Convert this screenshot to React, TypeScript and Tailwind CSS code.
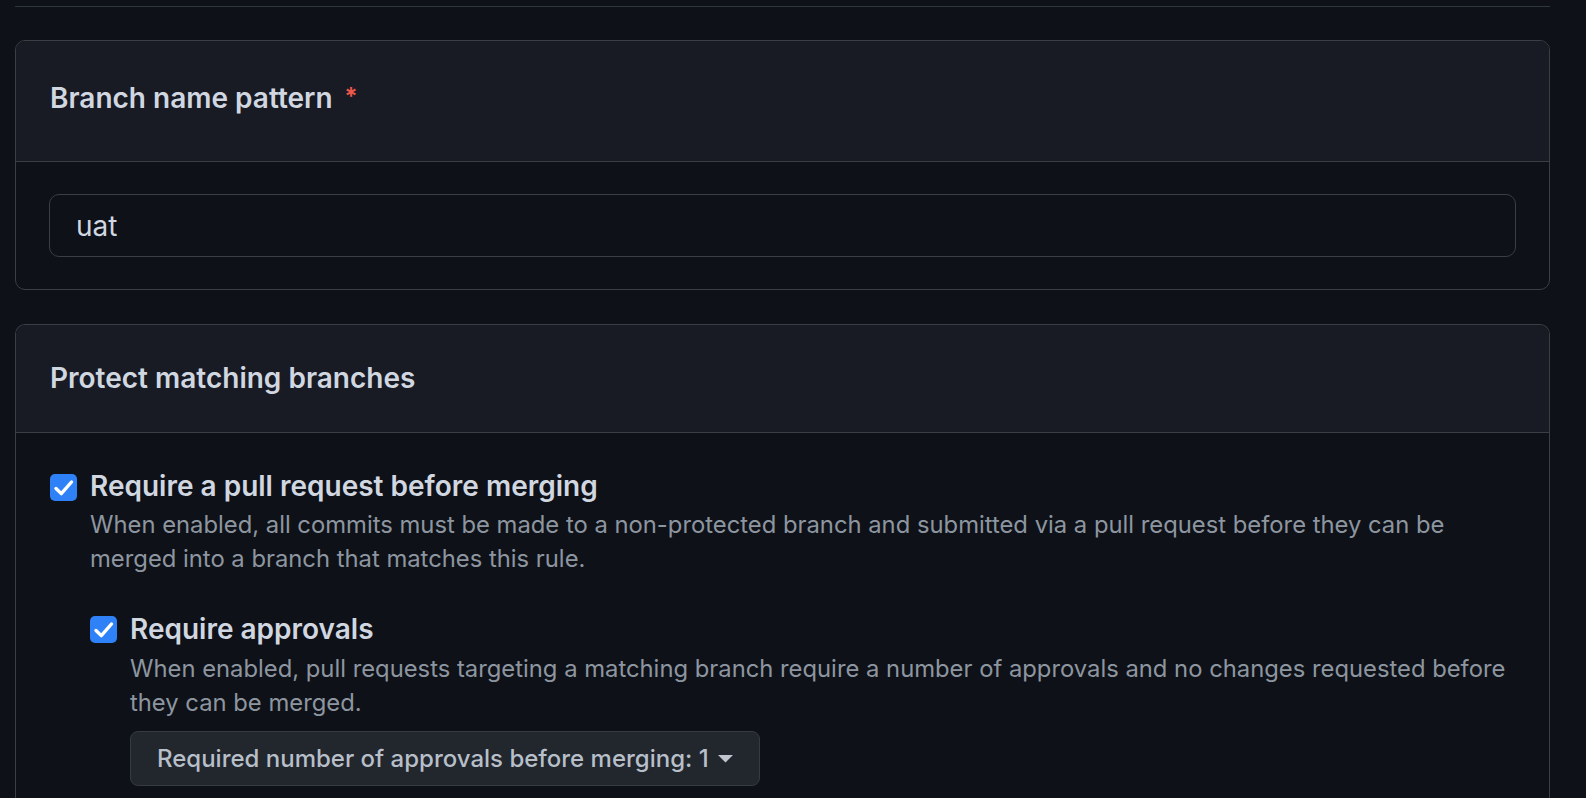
import React from "react";

function Check() {
  return (
    <span className="block h-[27px] w-[27px] shrink-0 rounded-[5px] bg-[#2f81f7]">
      <svg width="27" height="27" viewBox="0 0 27 27" fill="none">
        <path d="M6 14.5 L11.3 19.6 L21.5 8" stroke="white" strokeWidth="3.4" strokeLinecap="round" strokeLinejoin="round" />
      </svg>
    </span>
  );
}

export default function App() {
  return (
    <div
      className="h-[798px] overflow-hidden bg-[#0e1117] text-[#d1d7e0]"
      style={{ fontFamily: "Inter, 'Noto Sans', sans-serif" }}
    >
      <div className="w-[1535px] ml-[15px] pt-[6px]">
        <div className="h-px bg-[#30363d]" />
        <div className="mt-[33px] rounded-[10px] border border-[#3a3f46] overflow-hidden">
          <div className="h-[121px] bg-[#181b23] border-b border-[#3a3f46] flex items-center px-[34px] pb-[6px]">
            <span className="text-[28px] font-semibold">Branch name pattern</span>
            <span className="ml-[12px] text-[24px] font-semibold text-[#f0584d] -mt-[2px]">*</span>
          </div>
          <div className="px-[33px] pt-[32px] pb-[32px]">
            <div className="h-[63px] rounded-[10px] border border-[#3a3f46] bg-[#0e1117] flex items-center px-[26px] text-[28px]">
              uat
            </div>
          </div>
        </div>

        <div className="mt-[34px] rounded-t-[10px] border border-b-0 border-[#3a3f46] overflow-hidden">
          <div className="h-[108px] bg-[#181b23] border-b border-[#3a3f46] flex items-center px-[34px] pb-[2px]">
            <span className="text-[28px] font-semibold">Protect matching branches</span>
          </div>
          <div className="pl-[34px] pr-[30px] pt-[37px] pb-[40px]">
            <div className="flex gap-[13px]">
              <div className="pt-[4px]"><Check /></div>
              <div>
                <div className="text-[28px] font-semibold leading-[32px]">Require a pull request before merging</div>
                <div className="text-[23.8px] leading-[34px] text-[#8d96a0] mt-[6px]">
                  When enabled, all commits must be made to a non-protected branch and submitted via a pull request before they can be merged into a branch that matches this rule.
                </div>
                <div className="mt-[37px] flex gap-[13px]">
                  <div className="pt-[3px]"><Check /></div>
                  <div>
                    <div className="text-[28px] font-semibold leading-[32px]">Require approvals</div>
                    <div className="text-[23.8px] leading-[34px] text-[#8d96a0] mt-[7px]">
                      When enabled, pull requests targeting a matching branch require a number of approvals and no changes requested before they can be merged.
                    </div>
                    <div className="mt-[11px] inline-flex h-[55px] items-center gap-[9px] rounded-[8px] border border-[#363a42] bg-[#22262d] pl-[26px] pr-[26px] text-[24px] font-medium text-[#b7bfc9]">
                      <span>Required number of approvals before merging: 1</span>
                      <svg width="15" height="8" viewBox="0 0 15 8"><path d="M0 0 L15 0 L7.5 7.5 Z" fill="#c0c6ce" /></svg>
                    </div>
                  </div>
                </div>
              </div>
            </div>
          </div>
        </div>
      </div>
    </div>
  );
}
